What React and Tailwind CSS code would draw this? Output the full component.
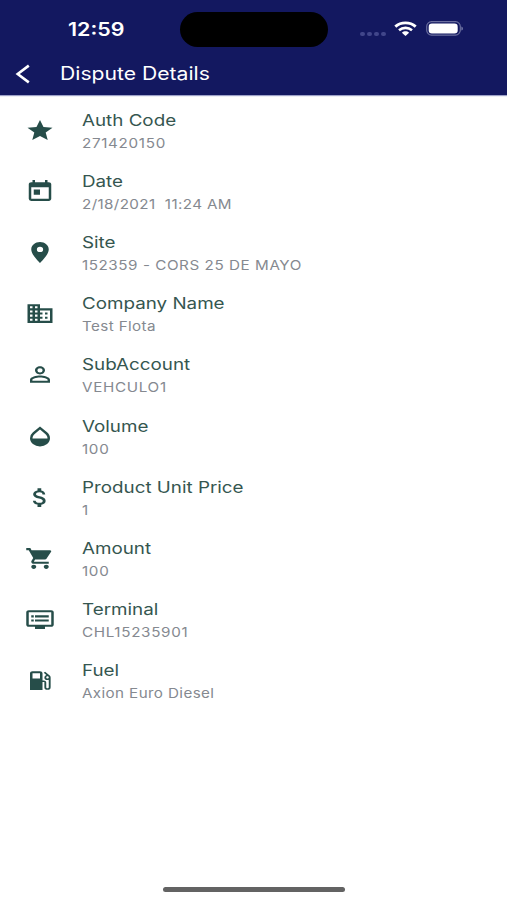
import {
  MdStar, MdToday, MdLocationOn, MdBusiness, MdPersonOutline, MdOpacity,
  MdAttachMoney, MdShoppingCart, MdDvr, MdLocalGasStation,
} from "react-icons/md";

const WORDS = "tracking-[0.32px]";
const CODE = "tracking-[0.58px]";

const rows = [
  [MdStar, "Auth Code", "271420150", CODE],
  [MdToday, "Date", "2/18/2021  11:24 AM", WORDS],
  [MdLocationOn, "Site", "152359 - CORS 25 DE MAYO", "tracking-[0.47px]"],
  [MdBusiness, "Company Name", "Test Flota", WORDS],
  [MdPersonOutline, "SubAccount", "VEHCULO1", CODE],
  [MdOpacity, "Volume", "100", CODE],
  [MdAttachMoney, "Product Unit Price", "1", CODE],
  [MdShoppingCart, "Amount", "100", CODE],
  [MdDvr, "Terminal", "CHL15235901", CODE],
  [MdLocalGasStation, "Fuel", "Axion Euro Diesel", WORDS],
];

function StatusBar() {
  return (
    <div className="flex h-[52px] items-start text-white">
      <div className="w-[180px] pt-[18px] pl-[68px]">
        <span className="block w-max origin-left scale-x-[1.19] text-[18px] leading-[24px] font-semibold">12:59</span>
      </div>
      <div className="mt-[12px] h-[35px] w-[148px] rounded-full bg-black" />
      <div className="ml-[32px] flex gap-[2.5px] pt-[31.5px]">
        {[0, 1, 2, 3].map((i) => (
          <span key={i} className="h-[4px] w-[4.6px] rounded-full bg-[#41468a]" />
        ))}
      </div>
      <svg className="mt-[21px] ml-[8.5px] h-[15px] w-[23px]" viewBox="0 0 23 15" fill="none" stroke="white" strokeWidth="2.9">
        <path d="M1.3 5.6C7 .6 16 .6 21.7 5.6" />
        <path d="M5 9.3C8.7 6.1 14.3 6.1 18 9.3" strokeWidth="2.6" />
        <path d="M7.9 11.7C10 9.8 13 9.8 15.1 11.7L11.5 14.9Z" fill="white" stroke="none" />
      </svg>
      <svg className="mt-[21px] ml-[8.5px] h-[15px] w-[38px]" viewBox="0 0 38 15">
        <rect x=".7" y=".7" width="33.6" height="13.4" rx="4.8" fill="none" stroke="#6b6f9f" strokeWidth="1.2" />
        <rect x="2.7" y="2.6" width="29" height="9.8" rx="3.2" fill="white" />
        <path d="M35.5 5.4C37.2 6 37.2 9 35.5 9.6Z" fill="#8d91b9" />
      </svg>
    </div>
  );
}

export default function App() {
  return (
    <div className="flex h-[900px] w-[507px] flex-col overflow-hidden bg-white font-['Inter','Liberation_Sans',sans-serif]">
      <header className="h-[95px] shrink-0 bg-[#131860] shadow-[0_1px_1px_#9da1c8]">
        <StatusBar />
        <div className="flex h-[43px] items-center text-white">
          <svg className="ml-[15px] h-[20px] w-[15px]" viewBox="0 0 15 20" fill="none" stroke="white" strokeWidth="2.6">
            <path d="M13.8 1.6L2.7 10L13.8 18.4" />
          </svg>
          <h1 className="ml-[30px] w-max origin-left scale-x-[1.175] text-[18px] leading-[24px]">Dispute Details</h1>
        </div>
      </header>
      <main className="flex flex-1 flex-col pt-[5px]">
        {rows.map(([Icon, title, value, tracking]) => (
          <div key={title} className="flex h-[61.1px] items-center">
            <Icon className="ml-[25px] h-[25px] w-[30px] text-[#264d49]" preserveAspectRatio="none" />
            <div className="ml-[27px] pt-[2px]">
              <div className="w-max origin-left scale-x-[1.175] text-[16px] leading-[24px] text-[#355650]">{title}</div>
              <div className={`w-max origin-left scale-x-[1.17] text-[13px] leading-[23px] whitespace-pre text-[#858990] ${tracking}`}>{value}</div>
            </div>
          </div>
        ))}
      </main>
      <div className="mb-[8px] ml-[163px] h-[5px] w-[182px] shrink-0 rounded-full bg-[#636363]" />
    </div>
  );
}
